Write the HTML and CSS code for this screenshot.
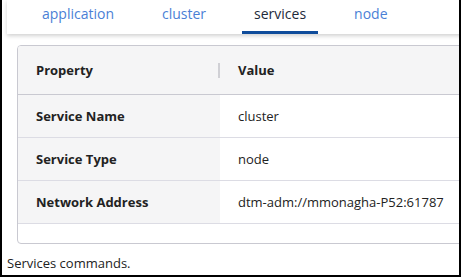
FILE: index.html
```html
<!DOCTYPE html>
<html lang="en">
<head>
    <meta charset="UTF-8">
    <title>Services</title>
    <link rel="stylesheet" href="styles.css">
</head>
<body>
    <div class="frame">
        <div class="tabs">
            <a href="#" class="tab">application</a>
            <a href="#" class="tab">cluster</a>
            <a href="#" class="tab active">services</a>
            <a href="#" class="tab">node</a>
        </div>

        <div class="card">
            <table class="props">
                <thead>
                    <tr>
                        <th class="col-key">Property<span class="sep"></span></th>
                        <th>Value</th>
                    </tr>
                </thead>
                <tbody>
                    <tr>
                        <td class="col-key">Service Name</td>
                        <td>cluster</td>
                    </tr>
                    <tr>
                        <td class="col-key">Service Type</td>
                        <td>node</td>
                    </tr>
                    <tr>
                        <td class="col-key">Network Address</td>
                        <td>dtm-adm://mmonagha-P52:61787</td>
                    </tr>
                </tbody>
            </table>
        </div>

        <p class="note">Services commands.</p>
    </div>
</body>
</html>
```

FILE: styles.css
```css
body {
    margin: 0;
    font-family: "Open Sans", "Noto Sans", sans-serif;
    background: #fff;
    color: #222;
}
.frame {
    height: 277px;
    box-sizing: border-box;
    border: 2px solid #000;
    border-top: none;
    overflow: hidden;
}
.tabs {
    display: flex;
    gap: 24px;
    width: 600px;
    height: 34px;
    margin-left: 5px;
    padding-left: 23px;
    background: #fff;
    box-shadow: 0 2px 4px rgba(0, 0, 0, 0.18);
}
.tab {
    padding: 0 12px 4px;
    font-size: 14px;
    line-height: 27px;
    color: #4a7fd6;
    text-decoration: none;
    border-bottom: 3px solid transparent;
}
.tab.active {
    color: #1d2a3a;
    border-bottom-color: #0f4c9b;
}
.card {
    width: 600px;
    height: 197px;
    margin: 11px 0 0 15px;
    border: 1px solid #c9c9d1;
    border-radius: 4px;
    overflow: hidden;
}
.props {
    width: 100%;
    border-collapse: collapse;
    font-size: 13px;
}
.props th {
    height: 48px;
    text-align: left;
    font-weight: 700;
    background: #f5f5f6;
    border-bottom: 1px solid #c9c9d1;
    padding: 0 18px;
}
.props td {
    height: 42px;
    padding: 0 18px;
    border-bottom: 1px solid #dcdce4;
    color: #222;
}
.props td.col-key {
    font-weight: 700;
    background: #f5f5f6;
}
.col-key {
    width: 166px;
    position: relative;
}
.sep {
    position: absolute;
    right: 0;
    top: 17px;
    width: 2px;
    height: 15px;
    background: #d0d0d5;
}
.note {
    margin: 10px 0 0 5px;
    font-size: 13px;
}
```
